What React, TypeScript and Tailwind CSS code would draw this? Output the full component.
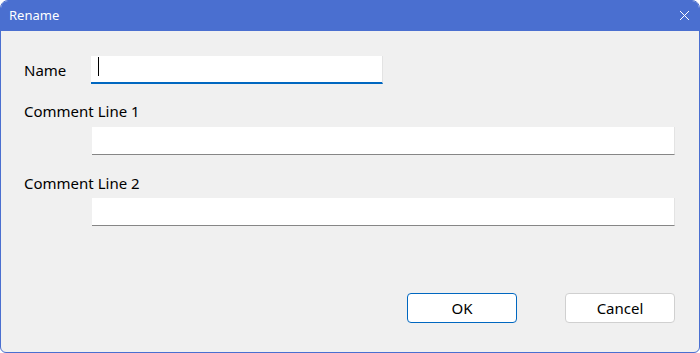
import React from 'react'

function Field({ focused }: { focused?: boolean }) {
  return (
    <div
      className={
        focused
          ? 'relative h-[28px] w-[292px] bg-white border-r border-[#e3e3e3] border-b-2 border-b-[#0067c0]'
          : 'h-[28px] flex-1 bg-white border-r border-[#e3e3e3] border-b border-b-[#868686]'
      }
    >
      {focused && <div className="absolute left-[7px] top-[1px] h-[19px] w-px bg-black" />}
    </div>
  )
}

export default function App() {
  return (
    <div
      className="w-[700px] h-[353px] flex flex-col bg-[#f0f0f0] border border-[#4a6fd0] rounded-t-[8px] rounded-b-[6px] overflow-hidden text-[#000]"
      style={{ fontFamily: '"Segoe UI", "Noto Sans", "Open Sans", sans-serif' }}
    >
      <div className="h-[30px] shrink-0 bg-[#4a6fd0] flex items-center justify-between pl-[8px] pr-[9px]">
        <span className="text-[13px] text-white">Rename</span>
        <svg width="11" height="11" viewBox="0 0 11 11" className="mt-[-1px]">
          <path d="M1 1 L10 10 M10 1 L1 10" stroke="white" strokeWidth="1" fill="none" />
        </svg>
      </div>

      <div className="flex-1 flex flex-col pl-[23px] pr-[24px]">
        <div className="flex items-center mt-[25px]">
          <span className="w-[67px] text-[15px]">Name</span>
          <Field focused />
        </div>

        <div className="mt-[17px] text-[15px] leading-[20px]">Comment Line 1</div>
        <div className="flex mt-[6px] pl-[68px]">
          <Field />
        </div>

        <div className="mt-[18px] text-[15px] leading-[20px]">Comment Line 2</div>
        <div className="flex mt-[5px] pl-[68px]">
          <Field />
        </div>

        <div className="flex justify-end gap-[48px] mt-[67px]">
          <button className="w-[110px] h-[30px] bg-white border border-[#0067c0] rounded-[4px] text-[15px]">
            OK
          </button>
          <button className="w-[110px] h-[30px] bg-white border border-[#d0d0d0] rounded-[4px] text-[15px]">
            Cancel
          </button>
        </div>
      </div>
    </div>
  )
}
